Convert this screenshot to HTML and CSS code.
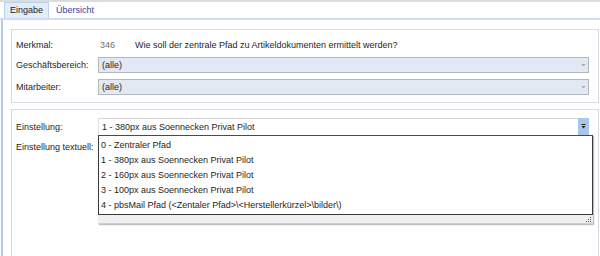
FILE: index.html
```html
<!DOCTYPE html>
<html lang="de">
<head>
    <meta charset="UTF-8">
    <title>Eingabe</title>
    <link rel="stylesheet" href="styles.css">
</head>
<body>

<div class="window">
    <!-- Reiter -->
    <div class="tabs">
        <div class="tab active">Eingabe</div>
        <div class="tab">Übersicht</div>
    </div>

    <div class="page">
        <!-- Kopfbereich -->
        <div class="group first">
            <div class="row">
                <span class="label">Merkmal:</span>
                <span class="number">346</span>
                <span>Wie soll der zentrale Pfad zu Artikeldokumenten ermittelt werden?</span>
            </div>
            <div class="row gap-small">
                <span class="label">Geschäftsbereich:</span>
                <div class="combo disabled">
                    <span class="value">(alle)</span>
                    <span class="arrow"><svg width="7" height="5" viewBox="0 0 7 5"><path d="M1.5 1h4L3.5 3.5z" fill="#a8a8a8"/></svg></span>
                </div>
            </div>
            <div class="row">
                <span class="label">Mitarbeiter:</span>
                <div class="combo disabled">
                    <span class="value">(alle)</span>
                    <span class="arrow"><svg width="7" height="5" viewBox="0 0 7 5"><path d="M1.5 1h4L3.5 3.5z" fill="#a8a8a8"/></svg></span>
                </div>
            </div>
        </div>

        <!-- Einstellung -->
        <div class="group second">
            <div class="row tall">
                <span class="label">Einstellung:</span>
                <div class="combo open">
                    <span class="value">1 - 380px aus Soennecken Privat Pilot</span>
                    <span class="button"><svg width="7" height="6" viewBox="0 0 7 6"><path d="M1.5 0.5h4" stroke="#222" stroke-width="1"/><path d="M1.5 2h4L3.5 4.5z" fill="#222"/></svg></span>

                    <div class="popup">
                        <ul class="list">
                            <li>0 - Zentraler Pfad</li>
                            <li>1 - 380px aus Soennecken Privat Pilot</li>
                            <li>2 - 160px aus Soennecken Privat Pilot</li>
                            <li>3 - 100px aus Soennecken Privat Pilot</li>
                            <li>4 - pbsMail Pfad (&lt;Zentaler Pfad&gt;\&lt;Herstellerkürzel&gt;\bilder\)</li>
                        </ul>
                        <div class="grip">
                            <svg width="6" height="6" viewBox="0 0 6 6"><g fill="#555"><rect x="4" y="0" width="1" height="1"/><rect x="2" y="2" width="1" height="1"/><rect x="4" y="2" width="1" height="1"/><rect x="0" y="4" width="1" height="1"/><rect x="2" y="4" width="1" height="1"/><rect x="4" y="4" width="1" height="1"/></g></svg>
                        </div>
                    </div>
                </div>
            </div>
            <div class="row textrow">
                <span class="label">Einstellung textuell:</span>
                <div class="textbox"></div>
            </div>
        </div>
    </div>
</div>

</body>
</html>
```

FILE: styles.css
```css
body {
    margin: 0;
    font-family: "Liberation Sans", Arial, sans-serif;
    font-size: 9px;
    color: #1e1e1e;
    background-color: #ffffff;
}
.window {
    height: 256px;
    overflow: hidden;
    border-top: 2px solid #dcdcdc;
    box-sizing: border-box;
}
.tabs {
    display: flex;
    align-items: flex-end;
    height: 16px;
    padding: 0 0 0 4px;
    border-bottom: 2px solid #cddff3;
}
.tab {
    height: 15px;
    line-height: 15px;
    padding: 0 6px 0 7px;
    color: #40409a;
}
.tab.active {
    color: #1e1e1e;
    background-color: #e2edf9;
    border: 1px solid #b9d1ee;
    border-bottom: none;
    padding: 0 5px 0 5px;
}
.page {
    border-left: 2px solid #b3cbea;
    margin-left: 1px;
    padding: 9px 1px 0 8px;
    height: 240px;
}
.group {
    border: 1px solid #d3dbe4;
    padding: 7px 9px 7px 4px;
}
.group.second {
    margin-top: 6px;
    padding-top: 8px;
    height: 200px;
}
.row {
    display: flex;
    align-items: center;
    height: 16px;
    margin-top: 6px;
    white-space: nowrap;
}
.row:first-child {
    margin-top: 0;
}
.row.gap-small {
    margin-top: 4px;
}
.row.tall {
    height: 17px;
}
.row.textrow {
    margin-top: 7px;
    align-items: flex-start;
}
.label {
    width: 82px;
    flex-shrink: 0;
}
.number {
    width: 35px;
    padding-left: 2px;
    color: #6e6e6e;
}
.combo {
    flex: 1;
    height: 100%;
    display: flex;
    align-items: center;
    box-sizing: border-box;
    position: relative;
}
.combo .value {
    flex: 1;
    padding-left: 3px;
}
.combo.disabled {
    background-color: #e3e9f4;
    border: 1px solid #b4b7bc;
}
.combo.disabled .arrow {
    width: 10px;
    display: flex;
    justify-content: center;
}
.combo.open {
    background-color: #ffffff;
    border-top: 1px solid #d6d6d6;
    border-left: 1px solid #e4e4e4;
}
.combo.open .button {
    width: 11px;
    height: 17px;
    margin-top: -1px;
    background-color: #a9c5ea;
    display: flex;
    align-items: center;
    justify-content: center;
}
.textbox {
    flex: 1;
    height: 70px;
    margin-top: -3px;
    border: 1px solid #c8c8c8;
}
.popup {
    position: absolute;
    left: -1px;
    top: 16px;
    right: -4px;
    background-color: #ffffff;
    box-shadow: 1px 1px 1px rgba(0, 0, 0, 0.25);
    z-index: 2;
}
.list {
    list-style: none;
    margin: 0;
    padding: 2px 0 1px 0;
    border: 1px solid #3a3a3a;
    border-top-color: #4a4a4a;
}
.list li {
    height: 15px;
    line-height: 15px;
    padding-left: 2px;
}
.grip {
    height: 8px;
    background-color: #f0f0f0;
    border-bottom: 1px solid #cfcfcf;
    display: flex;
    justify-content: flex-end;
    align-items: flex-end;
    padding-right: 1px;
}
```
